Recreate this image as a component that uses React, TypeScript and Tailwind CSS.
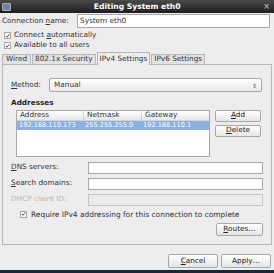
const font = { fontFamily: '"DejaVu Sans", "Liberation Sans", sans-serif' }

function Check() {
    return (
        <span className="w-[7px] h-[7px] border border-[#a8a8a8] bg-white flex items-center justify-center shrink-0">
            <svg width="6" height="6" viewBox="0 0 6 6">
                <path d="M1 3 L2.5 4.5 L5 1" stroke="#333" strokeWidth="1" fill="none" />
            </svg>
        </span>
    )
}

function Btn({ children, className = '' }: { children: React.ReactNode; className?: string }) {
    return (
        <div
            className={`flex items-center justify-center border border-[#a8a8a8] rounded-[2px] bg-gradient-to-b from-white to-[#e6e6e6] text-[#222] ${className}`}
        >
            {children}
        </div>
    )
}

function Field({ label, disabled = false }: { label: React.ReactNode; disabled?: boolean }) {
    return (
        <div className="flex items-center h-[12px] mb-[4px]">
            <span className={`w-[77px] ${disabled ? 'text-[#b8b8b8]' : 'text-[#333]'}`}>{label}</span>
            <div
                className={`flex-1 h-[12px] border ${disabled ? 'border-[#c8c8c8] bg-[#ececec]' : 'border-[#a8a8a8] bg-white'}`}
            />
        </div>
    )
}

export default function App() {
    return (
        <div className="w-[274px] h-[273px] bg-[#ededed] flex flex-col text-[7.3px] text-[#333] overflow-hidden" style={font}>
            <div className="h-[13px] bg-gradient-to-b from-[#4a4a4a] to-[#1e1e1e] flex items-center px-[2px] relative">
                <span className="w-[9px] h-[8px] border border-[#aaa] bg-[#6d86a8] rounded-[1px]" />
                <span className="flex-1 text-center text-white font-bold text-[7.6px]">Editing System eth0</span>
                <span className="text-[#ccc] text-[8px] mr-[2px]">×</span>
            </div>

            <div className="flex flex-col px-[2px] flex-1">
                <div className="flex items-center mt-[1px] h-[14px]">
                    <span className="w-[75px]">
                        Connection <u>n</u>ame:
                    </span>
                    <div className="flex-1 h-[14px] border border-[#a8a8a8] bg-white flex items-center px-[2px] mr-[2px]">
                        System eth0
                    </div>
                </div>
                <div className="flex items-center gap-[3px] pl-[2px] mt-[3px] h-[9px]">
                    <Check />
                    <span>
                        Connect <u>a</u>utomatically
                    </span>
                </div>
                <div className="flex items-center gap-[3px] pl-[2px] mt-[1px] h-[9px]">
                    <Check />
                    <span>Available to all users</span>
                </div>

                <div className="flex items-end mt-[2px] h-[13px] relative z-10">
                    <div className="h-[11px] px-[3px] border border-[#b8b8b8] bg-[#e2e2e2] flex items-center mr-[1px]">Wired</div>
                    <div className="h-[11px] px-[2px] border border-[#b8b8b8] bg-[#e2e2e2] flex items-center mr-[1px]">802.1x Security</div>
                    <div className="h-[13px] px-[2px] border border-b-0 border-[#b8b8b8] bg-[#ededed] flex items-center mr-[1px]">IPv4 Settings</div>
                    <div className="h-[11px] px-[2px] border border-[#b8b8b8] bg-[#e2e2e2] flex items-center">IPv6 Settings</div>
                </div>

                <div className="border border-[#b8b8b8] -mt-[1px] h-[181px] flex flex-col px-[8px] pt-[13px]">
                    <div className="flex items-center h-[14px]">
                        <span className="w-[38px]">
                            <u>M</u>ethod:
                        </span>
                        <div className="flex-1 h-[14px] border border-[#a8a8a8] rounded-[2px] bg-gradient-to-b from-white to-[#eaeaea] flex items-center justify-between px-[4px] mr-[1px]">
                            <span>Manual</span>
                            <span className="text-[6px] text-[#666]">⇕</span>
                        </div>
                    </div>

                    <div className="font-bold text-[#222] mt-[6px]">Addresses</div>

                    <div className="flex mt-[1px]">
                        <div className="ml-[5px] w-[194px] h-[47px] border border-[#a8a8a8] bg-white flex flex-col">
                            <div className="flex h-[10px] items-center bg-gradient-to-b from-white to-[#e8e8e8] border-b border-[#d4d4d4]">
                                <span className="w-[67px] pl-[3px] border-r border-[#d0d0d0]">Address</span>
                                <span className="w-[58px] pl-[3px] border-r border-[#d0d0d0]">Netmask</span>
                                <span className="flex-1 pl-[3px]">Gateway</span>
                            </div>
                            <div className="flex h-[9px] bg-[#8cb0df] text-white items-center text-[6.6px] whitespace-nowrap">
                                <span className="w-[67px] pl-[2px]">192.168.110.173</span>
                                <span className="w-[58px] pl-[1px]">255.255.255.0</span>
                                <span className="flex-1 pl-[1px]">192.168.110.1</span>
                            </div>
                        </div>
                        <div className="flex flex-col ml-[5px] gap-[3px] w-[46px]">
                            <Btn className="h-[12px]">
                                <span>
                                    <u>A</u>dd
                                </span>
                            </Btn>
                            <Btn className="h-[12px]">
                                <span>
                                    <u>D</u>elete
                                </span>
                            </Btn>
                        </div>
                    </div>

                    <div className="flex flex-col mt-[5px]">
                        <Field
                            label={
                                <>
                                    <u>D</u>NS servers:
                                </>
                            }
                        />
                        <Field
                            label={
                                <>
                                    <u>S</u>earch domains:
                                </>
                            }
                        />
                        <Field label="DHCP client ID:" disabled />
                    </div>

                    <div className="flex items-center gap-[4px] pl-[9px] h-[9px] text-[7.45px]">
                        <Check />
                        <span>Require IPv4 addressing for this connection to complete</span>
                    </div>

                    <div className="flex justify-end mt-[4px]">
                        <Btn className="h-[13px] w-[47px]">
                            <span>
                                <u>R</u>outes…
                            </span>
                        </Btn>
                    </div>
                </div>

                <div className="flex justify-end gap-[3px] mt-[9px] mr-[1px]">
                    <Btn className="h-[14px] w-[50px]">
                        <span>
                            <u>C</u>ancel
                        </span>
                    </Btn>
                    <Btn className="h-[14px] w-[50px]">
                        <span>Apply…</span>
                    </Btn>
                </div>
            </div>
            <div className="h-[3px] bg-[#1b2636]" />
        </div>
    )
}
